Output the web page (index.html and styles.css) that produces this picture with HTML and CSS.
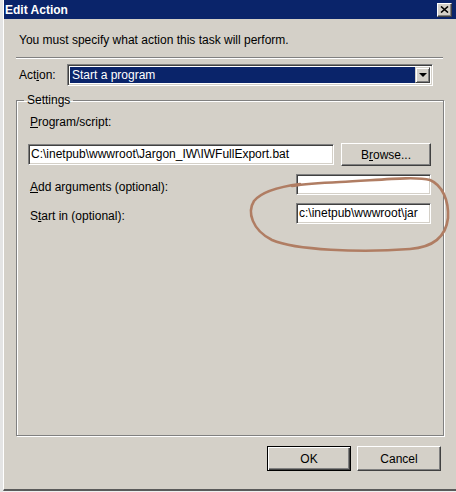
FILE: index.html
```html
<!DOCTYPE html>
<html>
<head>
  <title>Edit Action</title>
  <link rel="stylesheet" href="styles.css">
</head>
<body>
<div class="screen">
  <div class="edge"></div>
  <div class="window">
    <div class="titlebar">
      <span>Edit Action</span>
      <button class="close">
        <svg width="9" height="7" viewBox="0 0 9 7"><path d="M1 0.5 L8 6.5 M8 0.5 L1 6.5" stroke="#000" stroke-width="1.6"/></svg>
      </button>
    </div>
    <div class="content">
      <p class="intro">You must specify what action this task will perform.</p>
      <div class="sep"></div>
      <div class="action-row">
        <label class="action-label">Act<u>i</u>on:</label>
        <div class="select">
          <span class="select-value">Start a program</span>
          <span class="drop"><span class="arrow"></span></span>
        </div>
      </div>
      <fieldset class="settings">
        <legend>Settings</legend>
        <label class="prog-label"><u>P</u>rogram/script:</label>
        <div class="prog-row">
          <div class="field prog-field">C:\inetpub\wwwroot\Jargon_IW\IWFullExport.bat</div>
          <button class="btn browse">B<u>r</u>owse...</button>
        </div>
        <div class="opt-row">
          <label><u>A</u>dd arguments (optional):</label>
          <div class="field short"></div>
        </div>
        <div class="opt-row">
          <label>S<u>t</u>art in (optional):</label>
          <div class="field short">c:\inetpub\wwwroot\jar</div>
        </div>
      </fieldset>
      <div class="buttons">
        <button class="btn default">OK</button>
        <button class="btn">Cancel</button>
      </div>
    </div>
  </div>
  <!-- hand drawn circle over the fields -->
  <svg class="scribble" width="456" height="492" viewBox="0 0 456 492">
    <path d="M300,184 C285,186 262,191 254,201 C247,212 252,230 272,240 C295,250 360,253 410,249 C435,247 446,236 448,218 C449,200 442,185 430,180 C415,176 380,180 340,182 C320,183 305,184 292,186"
      fill="none" stroke="#b07d63" stroke-width="2.6" stroke-linecap="round"/>
  </svg>
</div>
</body>
</html>
```

FILE: styles.css
```css
body {
  margin: 0;
  background: #f2f2f2;
}
.screen {
  position: relative;
  display: flex;
  width: 456px;
  height: 492px;
  overflow: hidden;
  background: #f0f0f0;
  font-family: "Liberation Sans", Arial, sans-serif;
  font-size: 12px;
  color: #000;
}
.edge {
  width: 3px;
  background: #e4e4e4;
}
.window {
  display: flex;
  flex-direction: column;
  width: 453px;
  height: 491px;
  box-sizing: border-box;
  border-left: 1px solid #fff;
  border-bottom: 2px solid #5a5a5a;
  background: #d4d0c8;
}
.titlebar {
  display: flex;
  align-items: center;
  justify-content: space-between;
  height: 19px;
  padding: 0 4px 0 1px;
  background: #0a246a;
  color: #fff;
  font-weight: bold;
  font-size: 12px;
}
.close {
  display: flex;
  align-items: center;
  justify-content: center;
  width: 15px;
  height: 14px;
  padding: 0;
  background: #d4d0c8;
  border: 1px solid;
  border-color: #fff #404040 #404040 #fff;
  box-shadow: inset -1px -1px 0 #808080;
}
.content {
  display: flex;
  flex-direction: column;
  flex: 1;
  padding: 0 12px;
}
.intro {
  margin: 14px 0 0 3px;
  line-height: 15px;
}
.sep {
  margin: 9px 1px 0 0;
  border-top: 1px solid #808080;
  border-bottom: 1px solid #fff;
}
.action-row {
  display: flex;
  align-items: center;
  margin-top: 5px;
}
.action-label {
  width: 48px;
  margin-left: 3px;
}
.select {
  display: flex;
  align-items: stretch;
  width: 366px;
  height: 22px;
  box-sizing: border-box;
  border: 1px solid;
  border-color: #808080 #fff #fff #808080;
  box-shadow: inset 1px 1px 0 #404040, inset -1px -1px 0 #d4d0c8;
  padding: 2px;
  background: #fff;
}
.select-value {
  flex: 1;
  display: flex;
  align-items: center;
  padding-left: 2px;
  background: #0a246a;
  color: #fff;
}
.drop {
  display: flex;
  align-items: center;
  justify-content: center;
  width: 15px;
  box-sizing: border-box;
  background: #d4d0c8;
  border: 1px solid;
  border-color: #d4d0c8 #404040 #404040 #d4d0c8;
  box-shadow: inset 1px 1px 0 #fff, inset -1px -1px 0 #808080;
}
.arrow {
  width: 0;
  height: 0;
  border-left: 4px solid transparent;
  border-right: 4px solid transparent;
  border-top: 4px solid #000;
}
.settings {
  height: 343px;
  box-sizing: border-box;
  margin: 7px 1px 0 0;
  padding: 0 12px 0 11px;
  border: 1px solid #808080;
  box-shadow: inset 1px 1px 0 #fff, 1px 1px 0 #fff;
}
.settings legend {
  margin-left: -4px;
  padding: 0 3px;
  line-height: 14px;
}
.prog-label {
  display: block;
  margin: 8px 0 0 2px;
  line-height: 14px;
}
.prog-row {
  display: flex;
  align-items: center;
  margin-top: 14px;
}
.field {
  height: 21px;
  box-sizing: border-box;
  padding: 0 2px;
  border: 1px solid;
  border-color: #808080 #fff #fff #808080;
  box-shadow: inset 1px 1px 0 #404040, inset -1px -1px 0 #d4d0c8;
  background: #fff;
  line-height: 19px;
  white-space: nowrap;
  overflow: hidden;
}
.prog-field {
  width: 306px;
}
.opt-row {
  display: flex;
  align-items: center;
  margin-top: 8px;
}
.opt-row label {
  flex: 1;
  margin-left: 2px;
  padding-top: 5px;
}
.field.short {
  width: 135px;
}
.btn {
  height: 25px;
  padding: 0;
  font-family: "Liberation Sans", Arial, sans-serif;
  font-size: 12px;
  color: #000;
  background: #d4d0c8;
  border: 1px solid;
  border-color: #fff #404040 #404040 #fff;
  box-shadow: inset -1px -1px 0 #808080;
}
.browse {
  width: 90px;
  height: 23px;
  margin-left: 7px;
}
.buttons {
  display: flex;
  justify-content: flex-end;
  gap: 6px;
  margin: 10px 3px 0 0;
}
.buttons .btn {
  width: 84px;
}
.btn.default {
  border: 1px solid #000;
  box-shadow: inset 1px 1px 0 #fff, inset -1px -1px 0 #404040, inset -2px -2px 0 #808080;
}
.scribble {
  position: absolute;
  top: 0;
  left: 0;
  pointer-events: none;
}
```
